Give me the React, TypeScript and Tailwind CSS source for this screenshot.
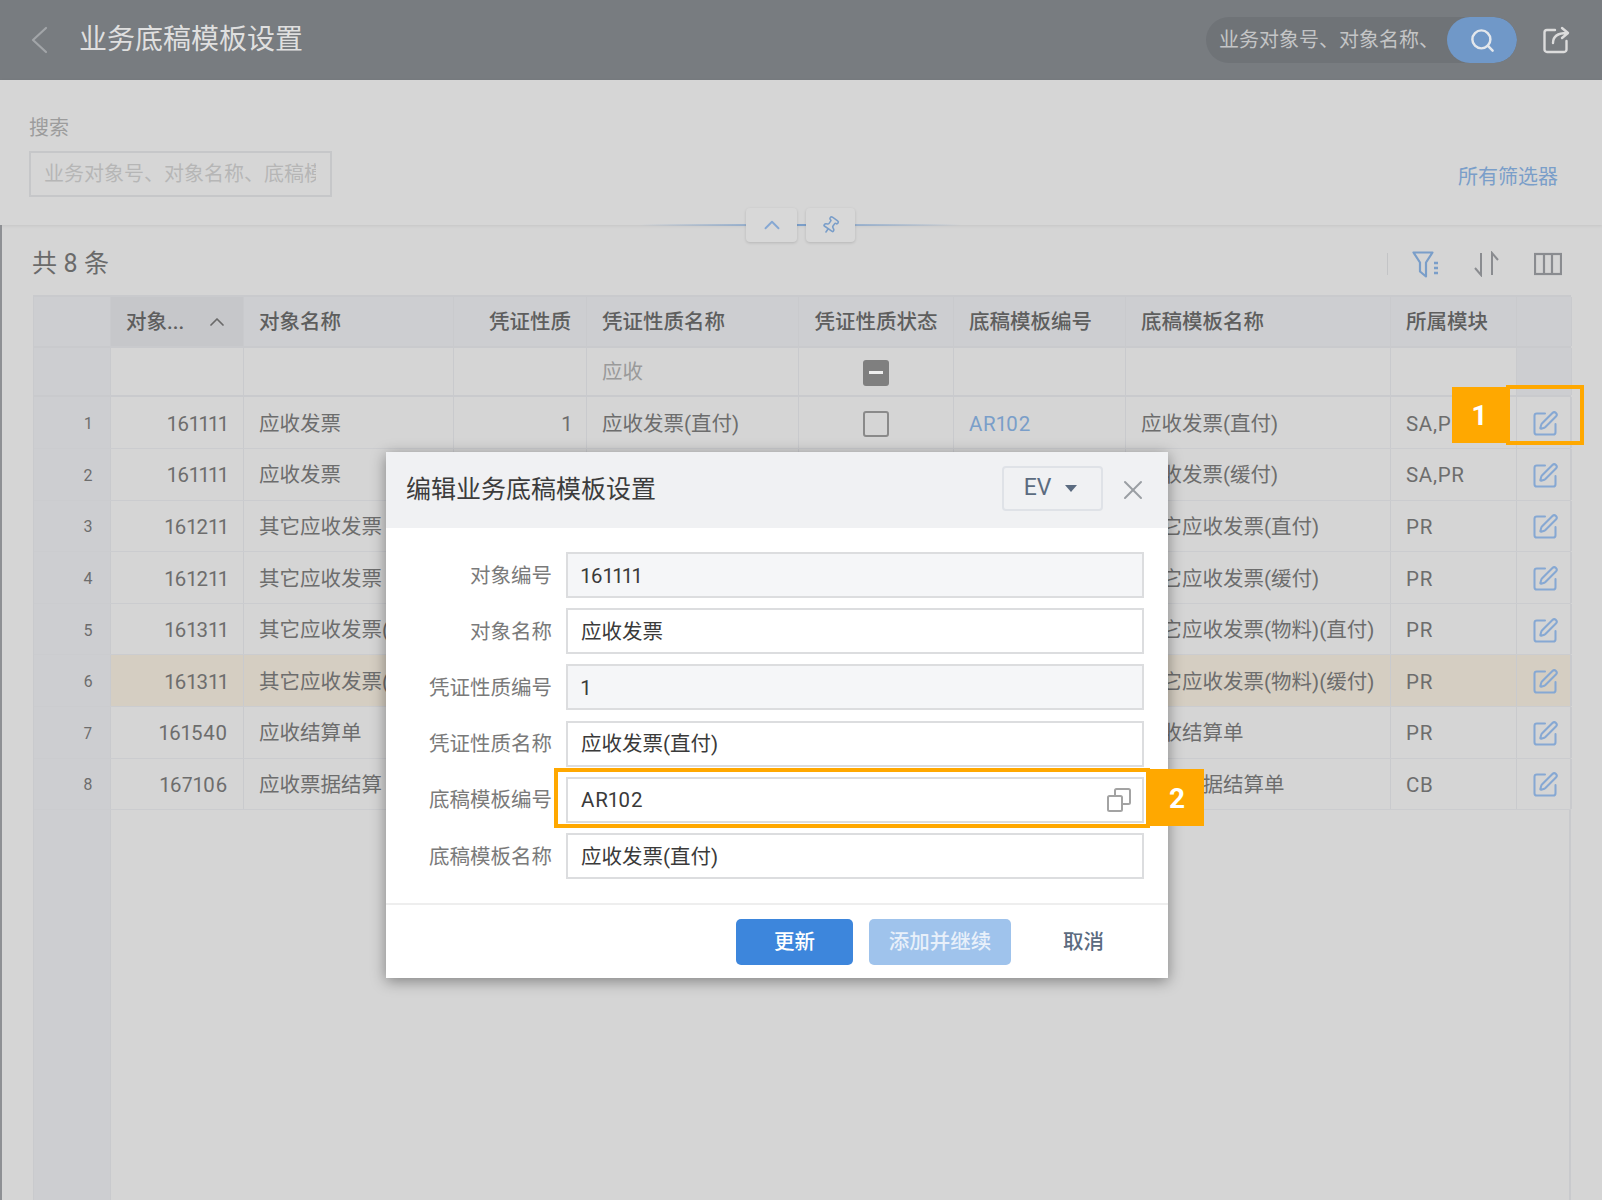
import { ChevronUp, Pin, Search, SquarePen, X } from "lucide-react";

const rows = [
  { id: "161111", name: "应收发票", tpl: "应收发票(缓付)", mod: "SA,PR" },
  { id: "161211", name: "其它应收发票", tpl: "其它应收发票(直付)", mod: "PR" },
  { id: "161211", name: "其它应收发票", tpl: "其它应收发票(缓付)", mod: "PR" },
  { id: "161311", name: "其它应收发票(物料)", tpl: "其它应收发票(物料)(直付)", mod: "PR" },
  { id: "161311", name: "其它应收发票(物料)", tpl: "其它应收发票(物料)(缓付)", mod: "PR", active: true },
  { id: "161540", name: "应收结算单", tpl: "应收结算单", mod: "PR" },
  { id: "167106", name: "应收票据结算", tpl: "应收票据结算单", mod: "CB" },
];

const fields = [
  { label: "对象编号", value: "161111", locked: true, latin: true },
  { label: "对象名称", value: "应收发票" },
  { label: "凭证性质编号", value: "1", locked: true, latin: true },
  { label: "凭证性质名称", value: "应收发票(直付)" },
  { label: "底稿模板编号", value: "AR102", copy: true, latin: true },
  { label: "底稿模板名称", value: "应收发票(直付)" },
];

const colClass =
  "grid grid-cols-[77px_133px_210px_133px_212px_155px_172px_265px_126px_55px]";
const cell = "flex items-center min-w-0 px-[15px] border-r border-[#c9cacd] whitespace-nowrap overflow-hidden";
const rowCell = `${cell} pt-[3px]`;
const gutter = "bg-[#cdced1]";

const HeaderCell = ({ title, right }: { title?: string; right?: boolean }) => (
  <div className={`${cell} ${right ? "justify-end" : ""} pt-[1px] font-medium text-[#5e5e5e]`}>{title}</div>
);

const CopyIcon = () => (
  <svg width="26" height="26" viewBox="0 0 26 26" fill="none" stroke="#a3a3a3" strokeWidth="2">
    <rect x="2" y="9" width="14" height="15" rx="1.5" />
    <path d="M9 9V3.5A1.5 1.5 0 0 1 10.5 2h12A1.5 1.5 0 0 1 24 3.5v12a1.5 1.5 0 0 1-1.5 1.5H16" />
  </svg>
);

const App = () => {
  return (
    <div className="relative h-[1200px] w-[1602px] overflow-hidden bg-[#d5d5d5] font-['Roboto','Noto_Sans_CJK_SC',sans-serif] text-[20.5px] text-[#6d6d6d] proportional-nums">
      <header className="flex h-[80px] items-center justify-between bg-[#787c80] pl-[30px] pr-[32px]">
        <div className="flex items-center">
          <svg width="18" height="28" viewBox="0 0 18 28" fill="none" stroke="#a2a5a8" strokeWidth="2.2" strokeLinecap="round" strokeLinejoin="round">
            <path d="M16 2 3 14l13 12" />
          </svg>
          <div className="ml-[31px] text-[28px] text-[#dfdfdf]">业务底稿模板设置</div>
        </div>
        <div className="flex items-center">
          <div className="flex h-[46px] w-[311px] items-center justify-between overflow-hidden rounded-full bg-[#6f7377] pl-[13px]">
            <span className="w-[214px] overflow-hidden whitespace-nowrap text-[20px] text-[#c4c5c6]">业务对象号、对象名称、</span>
            <button className="flex h-[46px] w-[70px] items-center justify-center rounded-full bg-[#7098c8]">
              <Search className="h-[27px] w-[27px] text-[#e3e7ec]" strokeWidth={2.2} />
            </button>
          </div>
          <svg className="ml-[25px]" width="28" height="28" viewBox="0 0 28 28" fill="none" stroke="#dcdcdc" strokeWidth="2.4" strokeLinecap="round" strokeLinejoin="round">
            <path d="M13 4H5a2.5 2.5 0 0 0-2.5 2.5v17A2.5 2.5 0 0 0 5 26h17a2.5 2.5 0 0 0 2.5-2.5V15" />
            <path d="M11 17c0-6 4-10 14-10M20 2l6 5-6 5" />
          </svg>
        </div>
      </header>

      <section className="relative flex h-[145px] items-end justify-between bg-[#d6d6d6] pb-[28px] pl-[29px] pr-[44px] shadow-[0_1px_3px_rgba(0,0,0,0.08)]">
        <div>
          <div className="text-[20px] leading-[26px] text-[#9c9c9c]">搜索</div>
          <div className="mt-[10px] flex h-[46px] w-[303px] items-center border-2 border-[#c6c7c9] pl-[13px] pr-[14px]">
            <span className="overflow-hidden whitespace-nowrap text-[20px] text-[#b6b6b6]">业务对象号、对象名称、底稿模板编号</span>
          </div>
        </div>
        <a className="mb-[5px] text-[20px] text-[#7a9ec9]">所有筛选器</a>
        <div className="absolute bottom-[-1px] left-[640px] h-[2px] w-[321px] bg-gradient-to-r from-transparent via-[#7a9ec9] to-transparent" />
        <div className="absolute bottom-[-17px] left-[746px] flex gap-[9px]">
          <button className="flex h-[34px] w-[51px] items-center justify-center rounded bg-[#d8d8d8] shadow-[0_1px_3px_rgba(0,0,0,0.15)]">
            <ChevronUp className="h-[26px] w-[26px] text-[#86a8d3]" strokeWidth={1.75} />
          </button>
          <button className="flex h-[34px] w-[49px] items-center justify-center rounded bg-[#d8d8d8] shadow-[0_1px_3px_rgba(0,0,0,0.15)]">
            <Pin className="h-[19px] w-[19px] rotate-[35deg] text-[#7a9ec9]" strokeWidth={2} />
          </button>
        </div>
      </section>

      <div className="flex h-[70px] items-center justify-between pl-[32px] pr-[40px] pt-[8px]">
        <div className="text-[25px] text-[#6a6a6a]">共 8 条</div>
        <div className="flex items-center">
          <div className="mr-[24px] h-[22px] w-px bg-[#c3c4c6]" />
          <svg width="28" height="27" viewBox="0 0 28 27" fill="none" stroke="#7a9ec9" strokeWidth="2.2" strokeLinejoin="round">
            <path d="M1.5 1.5h19l-6.5 10v14l-6-5v-9z" />
            <path d="M22 12h4M22 17h4M22 22h4" strokeWidth="2.6" />
          </svg>
          <svg className="ml-[32px]" width="30" height="26" viewBox="0 0 30 26" fill="none" stroke="#8a8c90" strokeWidth="2">
            <path d="M9 2v22L3 17" />
            <path d="M20 24V2l6 7" />
          </svg>
          <svg className="ml-[32px]" width="28" height="24" viewBox="0 0 28 24" fill="none" stroke="#8a8c90" strokeWidth="2.2">
            <rect x="1" y="2" width="26" height="20" />
            <path d="M10 2v20M18 2v20" />
          </svg>
        </div>
      </div>

      <div className="absolute left-0 top-[225px] h-[975px] w-[2px] bg-[#8e9094]" />

      <div className="ml-[33px] flex h-[905px] w-[1538px] flex-col border-l border-t-2 border-[#c9cacd]">
        <div className={`${colClass} h-[51px] border-b-2 border-[#c9cacd] bg-[#cdced1]`}>
          <HeaderCell />
          <div className={`${cell} justify-between bg-[#c6c7ca] pr-[14px] pt-[1px] font-medium text-[#5e5e5e]`}>
            <span>对象...</span>
            <ChevronUp className="h-[24px] w-[24px] text-[#6a6a6a]" strokeWidth={1.75} />
          </div>
          <HeaderCell title="对象名称" />
          <HeaderCell title="凭证性质" right />
          <HeaderCell title="凭证性质名称" />
          <div className={`${cell} justify-center px-0 pt-[1px] font-medium text-[#5e5e5e]`}>凭证性质状态</div>
          <HeaderCell title="底稿模板编号" />
          <HeaderCell title="底稿模板名称" />
          <HeaderCell title="所属模块" />
          <HeaderCell />
        </div>

        <div className={`${colClass} h-[49px] border-b-2 border-[#c9cacd]`}>
          <div className={`${cell} ${gutter}`} />
          <div className={cell} />
          <div className={cell} />
          <div className={cell} />
          <div className={`${cell} pt-[2px] text-[#9a9a9a]`}>应收</div>
          <div className={`${cell} justify-center pt-[2px]`}>
            <span className="flex h-[26px] w-[26px] items-center justify-center rounded-[3px] bg-[#7f7f7f]">
              <span className="h-[3px] w-[14px] bg-[#eeeeee]" />
            </span>
          </div>
          <div className={cell} />
          <div className={cell} />
          <div className={cell} />
          <div className={`${cell} ${gutter}`} />
        </div>

        <div className={`${colClass} h-[52px] border-b border-[#cbcccf]`}>
          <div className={`${rowCell} ${gutter} justify-center pl-[32px] pr-0 text-[16px]`}>1</div>
          <div className={`${rowCell} justify-end tracking-[0.7px]`}>161111</div>
          <div className={rowCell}>应收发票</div>
          <div className={`${rowCell} justify-end`}>1</div>
          <div className={rowCell}>应收发票(直付)</div>
          <div className={`${rowCell} justify-center`}>
            <span className="h-[26px] w-[26px] rounded-[3px] border-2 border-[#8a8a8a]" />
          </div>
          <div className={`${rowCell} tracking-[0.7px] text-[#7a9ec9]`}>AR102</div>
          <div className={rowCell}>应收发票(直付)</div>
          <div className={`${rowCell} tracking-[0.7px]`}>SA,PR</div>
          <div className={`${rowCell} justify-center border-r-2 pl-[17px]`}>
            <SquarePen className="h-[28px] w-[28px] shrink-0 text-[#86a8d3]" strokeWidth={1.75} />
          </div>
        </div>

        {rows.map((r, i) => (
          <div key={i} className={`${colClass} h-[51.6px] border-b border-[#cbcccf] ${r.active ? "bg-[#d5cec2]" : ""}`}>
            <div className={`${rowCell} ${gutter} justify-center pl-[32px] pr-0 text-[16px]`}>{i + 2}</div>
            <div className={`${rowCell} justify-end tracking-[0.7px]`}>{r.id}</div>
            <div className={rowCell}>{r.name}</div>
            <div className={rowCell} />
            <div className={rowCell} />
            <div className={rowCell} />
            <div className={rowCell} />
            <div className={rowCell}>{r.tpl}</div>
            <div className={`${rowCell} tracking-[0.7px]`}>{r.mod}</div>
            <div className={`${rowCell} justify-center border-r-2 pl-[17px]`}>
              <SquarePen className="h-[28px] w-[28px] shrink-0 text-[#86a8d3]" strokeWidth={1.75} />
            </div>
          </div>
        ))}

        <div className="flex flex-1 border-r-2 border-[#c9cacd]">
          <div className={`w-[77px] border-r border-[#c9cacd] ${gutter}`} />
        </div>
      </div>

      <div className="absolute left-[386px] top-[452px] w-[782px] bg-white shadow-[0_3px_14px_rgba(0,0,0,0.4)]">
        <div className="flex h-[76px] items-center justify-between bg-[#f0f1f3] pl-[20px] pr-[19px]">
          <div className="text-[25px] text-[#3c3c3c]">编辑业务底稿模板设置</div>
          <div className="flex items-center">
            <button className="mb-[4px] flex h-[45px] w-[101px] items-center justify-center gap-[14px] rounded border-2 border-[#dfe2e7] pr-[4px] text-[#5b6b80]">
              <span className="text-[23px]">EV</span>
              <span className="h-0 w-0 border-x-[6px] border-t-[7px] border-x-transparent border-t-[#5b6b80]" />
            </button>
            <X className="ml-[14px] h-[32px] w-[32px] text-[#9a9ea3]" strokeWidth={1.5} />
          </div>
        </div>

        <div className="flex flex-col gap-[10.2px] py-[24px] pr-[24px]">
          {fields.map((f) => (
            <div key={f.label} className="flex items-center gap-[14px]">
              <label className="w-[166px] pt-[2px] text-right text-[#7a7a7a]">{f.label}</label>
              <div
                className={`flex h-[46px] flex-1 items-center justify-between border-2 border-[#dcdddf] pl-[13px] pr-[10px] text-[#3a3a3a] ${
                  f.locked ? "bg-[#f5f6f8]" : "bg-white"
                }`}
              >
                <span className={`pt-[2px] ${f.latin ? "tracking-[0.8px]" : ""}`}>{f.value}</span>
                {f.copy && <CopyIcon />}
              </div>
            </div>
          ))}
        </div>

        <div className="flex h-[75px] items-start justify-end gap-[16px] border-t-2 border-[#eeeeee] pr-[25px] pt-[14px]">
          <button className="h-[46px] w-[117px] rounded-[5px] bg-[#3d86dc] font-medium text-white">更新</button>
          <button className="h-[46px] w-[142px] rounded-[5px] bg-[#9fc3ec] font-medium text-[#e8f0fa]">添加并继续</button>
          <button className="h-[46px] w-[116px] pr-[3px] font-medium text-[#5b6b80]">取消</button>
        </div>
      </div>

      <div className="absolute left-[1506px] top-[385px] h-[60px] w-[78px] border-4 border-[#ffa800]" />
      <div className="absolute left-[1452px] top-[387px] flex h-[56px] w-[54px] items-center justify-center bg-[#ffa800] pt-[2px] text-[28px] font-bold text-white">
        1
      </div>
      <div className="absolute left-[554px] top-[768px] h-[60px] w-[596px] border-4 border-[#ffa800]" />
      <div className="absolute left-[1150px] top-[769px] flex h-[57px] w-[54px] items-center justify-center bg-[#ffa800] pt-[2px] text-[28px] font-bold text-white">
        2
      </div>
    </div>
  );
};

export default App;
